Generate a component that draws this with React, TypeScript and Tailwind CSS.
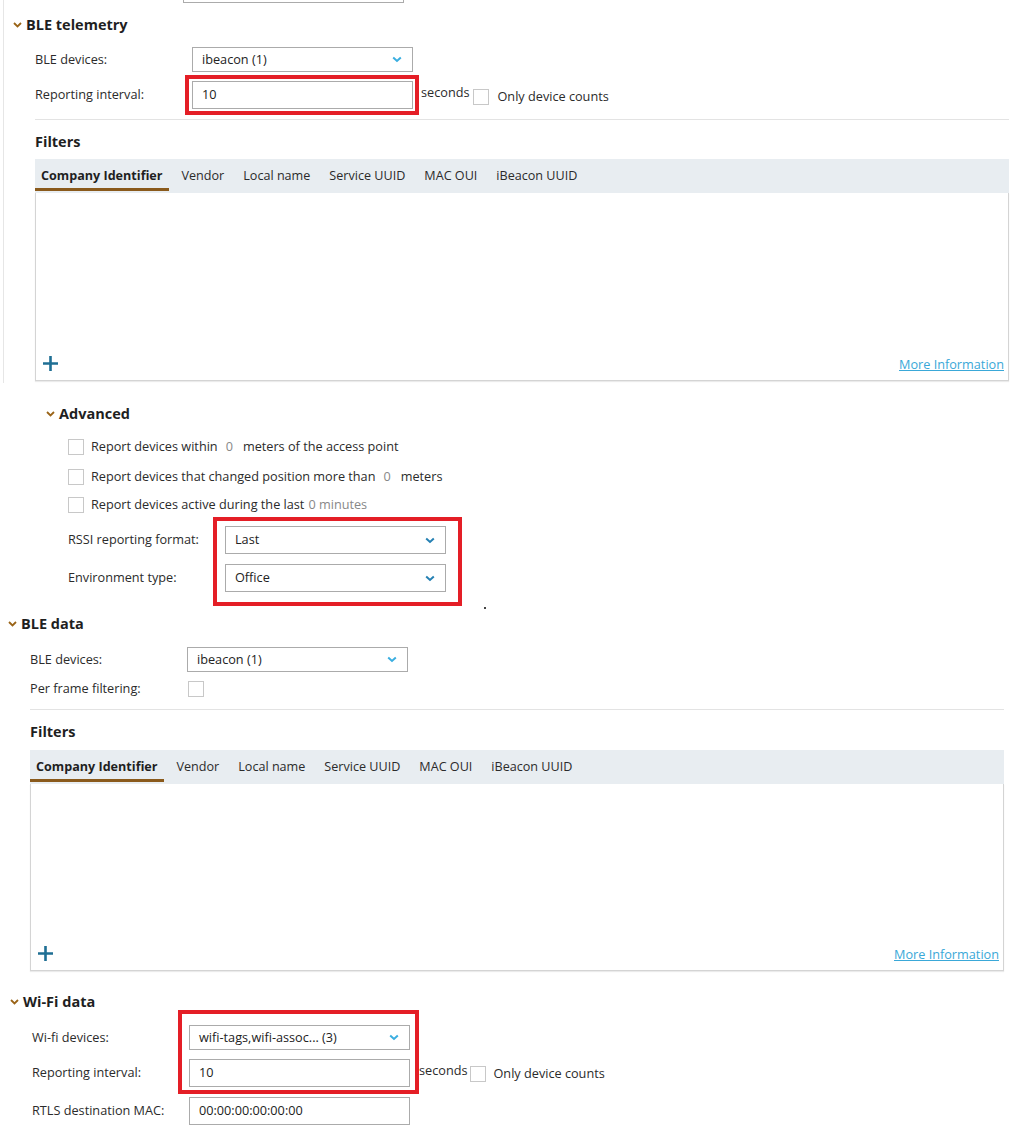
import React from "react";

const HeadChevron = () => (
  <svg width="9" height="6" viewBox="0 0 9 6" className="shrink-0">
    <polyline points="1,1 4.5,4.5 8,1" fill="none" stroke="#9a6418" strokeWidth="1.8" />
  </svg>
);

const SelChevron = ({ color = "#3aaee0" }: { color?: string }) => (
  <svg width="10" height="7" viewBox="0 0 10 7" className="shrink-0">
    <polyline points="1.2,1.5 5,5 8.8,1.5" fill="none" stroke={color} strokeWidth="2" />
  </svg>
);

const Header = ({ title, className }: { title: string; className: string }) => (
  <div className={`flex items-center h-[22px] gap-[4px] ${className}`}>
    <HeadChevron />
    <span className="text-[14.5px] font-bold text-[#1f1f1f] leading-none">{title}</span>
  </div>
);

const Select = ({ value, h = "h-[25px]", color }: { value: string; h?: string; color?: string }) => (
  <div className={`w-[221px] ${h} border border-[#ababab] bg-white flex items-center justify-between pl-[9px] pr-[10px]`}>
    <span className="text-[12.7px] text-[#222]">{value}</span>
    <SelChevron color={color} />
  </div>
);

const Input = ({ value }: { value: string }) => (
  <div className="w-[221px] h-[28px] border border-[#ababab] bg-white flex items-center pl-[9px]">
    <span className="text-[12.7px] text-[#222]">{value}</span>
  </div>
);

const Box = ({ className = "" }: { className?: string }) => (
  <div className={`w-[16px] h-[16px] border border-[#c8c8c8] bg-white shrink-0 ${className}`} />
);

const tabs = ["Company Identifier", "Vendor", "Local name", "Service UUID", "MAC OUI", "iBeacon UUID"];

const Filters = ({ boxH }: { boxH: string }) => (
  <div className="w-[974px]">
    <div className="h-[34px] bg-[#e8edf1] flex gap-[7px]">
      {tabs.map((t, i) => (
        <div key={t} className="relative px-[6px] flex items-center">
          <span className={`text-[12.6px] ${i === 0 ? "font-bold text-[#1f1f1f]" : "text-[#2b2b2b]"}`}>{t}</span>
          {i === 0 && <div className="absolute left-0 right-0 bottom-[2px] h-[3px] bg-[#8a5a1c]" />}
        </div>
      ))}
    </div>
    <div className={`${boxH} border-x border-b border-[#d4d4d4] flex items-end justify-between pl-[6px] pr-[4px] pb-[6px] shadow-[0_1px_1px_rgba(0,0,0,0.08)]`}>
      <svg width="17" height="17" viewBox="0 0 17 17" className="mb-[2px]">
        <path d="M8.5 1v15M1 8.5h15" stroke="#1f6f94" strokeWidth="2.6" />
      </svg>
      <span className="text-[12.7px] text-[#3aa8d8] underline">More Information</span>
    </div>
  </div>
);

export default function App() {
  return (
    <div className="w-[1018px] min-h-[1131px] bg-white text-[#2b2b2b] text-[12.7px] font-['Open_Sans',sans-serif] overflow-hidden">
      {/* BLE telemetry */}
      <div className="ml-[3px] border-l border-[#e6e6e6] pb-[2px]">
        <div className="ml-[179px] w-[221px] h-[3px] border-x border-b border-[#ababab]" />
        <Header title="BLE telemetry" className="mt-[11px] pl-[9px]" />
        <div className="pl-[31px]">
          <div className="mt-[11px] flex items-center">
            <div className="w-[157px]">BLE devices:</div>
            <Select value="ibeacon (1)" />
          </div>
          <div className="mt-[9px] flex items-start">
            <div className="w-[157px] h-[28px] flex items-center">Reporting interval:</div>
            <div className="relative">
              <Input value="10" />
              <div className="absolute -left-[7px] -right-[6px] -top-[6px] -bottom-[6px] border-[4px] border-[#e41e26]" />
            </div>
            <span className="ml-[8px] mt-[2px] leading-[18px]">seconds</span>
            <Box className="ml-[4px] mt-[8px]" />
            <span className="ml-[8px] mt-[6px] leading-[18px]">Only device counts</span>
          </div>
          <div className="mt-[10px] w-[974px] h-px bg-[#e3e3e3]" />
          <div className="mt-[12px] h-[20px] flex items-center text-[14.5px] font-bold text-[#1f1f1f]">Filters</div>
          <div className="mt-[7px]">
            <Filters boxH="h-[188px]" />
          </div>
        </div>
      </div>

      {/* Advanced */}
      <Header title="Advanced" className="mt-[20px] pl-[46px]" />
      <div className="pl-[68px]">
        <div className="mt-[11px] h-[22px] flex items-center">
          <Box />
          <span className="ml-[7px]">Report devices within</span>
          <span className="ml-[8px] mr-[10px] text-[#888]">0</span>
          <span>meters of the access point</span>
        </div>
        <div className="mt-[8px] h-[22px] flex items-center">
          <Box />
          <span className="ml-[7px]">Report devices that changed position more than</span>
          <span className="ml-[8px] mr-[10px] text-[#888]">0</span>
          <span>meters</span>
        </div>
        <div className="mt-[6px] h-[22px] flex items-center">
          <Box />
          <span className="ml-[7px]">Report devices active during the last</span>
          <span className="ml-[4px] text-[#888]">0 minutes</span>
        </div>
        <div className="mt-[10px] flex items-center">
          <div className="w-[157px]">RSSI reporting format:</div>
          <div className="relative">
            <Select value="Last" h="h-[28px]" color="#2580b3" />
            <div className="absolute -left-[12px] -right-[16px] -top-[9px] h-[89px] border-[4px] border-[#e41e26]" />
            <div className="absolute left-[259px] top-[81px] w-[2px] h-[2px] bg-[#444]" />
          </div>
        </div>
        <div className="mt-[10px] flex items-center">
          <div className="w-[157px]">Environment type:</div>
          <Select value="Office" h="h-[28px]" color="#2580b3" />
        </div>
      </div>

      {/* BLE data */}
      <Header title="BLE data" className="mt-[21px] pl-[8px]" />
      <div className="pl-[30px]">
        <div className="mt-[12px] flex items-center">
          <div className="w-[157px]">BLE devices:</div>
          <Select value="ibeacon (1)" />
        </div>
        <div className="mt-[9px] flex items-center h-[16px]">
          <div className="w-[158px]">Per frame filtering:</div>
          <Box />
        </div>
        <div className="mt-[12px] w-[974px] h-px bg-[#e3e3e3]" />
        <div className="mt-[12px] h-[20px] flex items-center text-[14.5px] font-bold text-[#1f1f1f]">Filters</div>
        <div className="mt-[8px]">
          <Filters boxH="h-[187px]" />
        </div>
      </div>

      {/* Wi-Fi data */}
      <Header title="Wi-Fi data" className="mt-[20px] pl-[10px]" />
      <div className="pl-[32px]">
        <div className="mt-[12px] flex items-center">
          <div className="w-[157px]">Wi-fi devices:</div>
          <div className="relative">
            <Select value="wifi-tags,wifi-assoc... (3)" />
            <div className="absolute -left-[11px] -right-[9px] -top-[15px] h-[84px] border-[4px] border-[#e41e26]" />
          </div>
        </div>
        <div className="mt-[9px] flex items-start">
          <div className="w-[157px] h-[28px] flex items-center">Reporting interval:</div>
          <Input value="10" />
          <span className="ml-[9px] mt-[2px] leading-[18px]">seconds</span>
          <Box className="ml-[3px] mt-[7px]" />
          <span className="ml-[7px] mt-[5px] leading-[18px]">Only device counts</span>
        </div>
        <div className="mt-[10px] flex items-center">
          <div className="w-[157px]">RTLS destination MAC:</div>
          <Input value="00:00:00:00:00:00" />
        </div>
      </div>
    </div>
  );
}
